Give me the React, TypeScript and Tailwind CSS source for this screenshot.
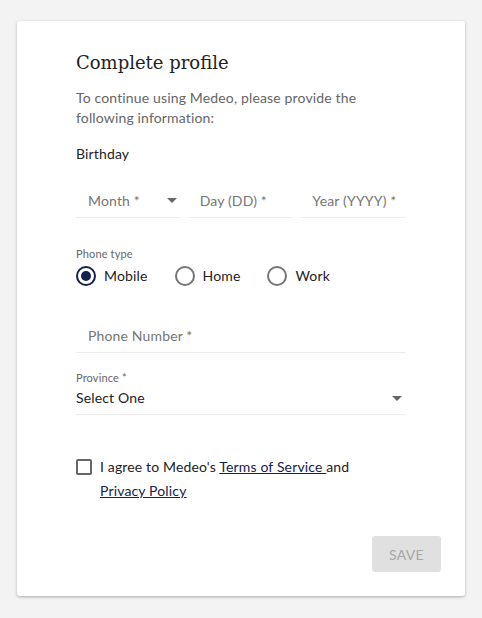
function Caret({ className = '' }: { className?: string }) {
  return (
    <svg width="10" height="5" viewBox="0 0 10 5" className={className}>
      <path d="M0 0 L10 0 L5 5 Z" fill="#666" />
    </svg>
  )
}

function Radio({ label, checked }: { label: string; checked?: boolean }) {
  return (
    <label className="flex items-center gap-[8px]">
      <span
        className={`flex h-[20px] w-[20px] items-center justify-center rounded-full border-2 ${
          checked ? 'border-[#14234b]' : 'border-[#757575]'
        }`}
      >
        {checked && <span className="h-[10px] w-[10px] rounded-full bg-[#14234b]" />}
      </span>
      <span className="text-[14px] text-[#222]">{label}</span>
    </label>
  )
}

export default function App() {
  return (
    <div className="min-h-[618px] bg-[#f3f3f3] pl-[17px] pt-[21px] font-['Lato',sans-serif] tracking-[0.15px]">
      <div className="h-[575px] w-[448px] rounded-[3px] bg-white pl-[59px] pr-[24px] pt-[28px] shadow-[0_1px_3px_rgba(0,0,0,0.3)]">
        <h1 className="font-['DejaVu_Serif',serif] text-[18px] leading-[28px] tracking-normal text-[#222]">Complete profile</h1>
        <p className="mt-[11px] w-[330px] text-[14px] leading-[20px] text-[#666]">
          To continue using Medeo, please provide the following information:
        </p>
        <p className="mt-[16px] text-[14px] leading-[20px] text-[#222]">Birthday</p>

        <div className="mt-[20px] flex w-[330px] gap-[8px]">
          <div className="flex h-[34px] w-[105px] items-center justify-between border-b border-[#ececec] pl-[12px] pr-[4px]">
            <span className="text-[14px] text-[#757575]">Month *</span>
            <Caret />
          </div>
          <div className="flex h-[34px] w-[105px] items-center border-b border-[#ececec] pl-[11px]">
            <span className="text-[14px] text-[#757575]">Day (DD) *</span>
          </div>
          <div className="flex h-[34px] w-[105px] items-center border-b border-[#ececec] pl-[11px]">
            <span className="text-[14px] text-[#757575]">Year (YYYY) *</span>
          </div>
        </div>

        <p className="mt-[28px] text-[11px] leading-[16px] text-[#666]">Phone type</p>
        <div className="mt-[3px] flex gap-[27px]">
          <Radio label="Mobile" checked />
          <Radio label="Home" />
          <Radio label="Work" />
        </div>

        <div className="mt-[33px] flex h-[34px] w-[330px] items-center border-b border-[#ececec] pl-[12px]">
          <span className="text-[14px] text-[#757575]">Phone Number *</span>
        </div>

        <div className="mt-[17px] w-[330px] border-b border-[#ececec] pb-[6px]">
          <p className="text-[11px] leading-[16px] text-[#666]">Province *</p>
          <div className="mt-[2px] flex items-center justify-between pr-[4px]">
            <span className="text-[14px] leading-[20px] text-[#222]">Select One</span>
            <Caret />
          </div>
        </div>

        <div className="mt-[40px] flex w-[330px] gap-[8px]">
          <span className="mt-[4px] h-[16px] w-[16px] shrink-0 rounded-[2px] border-2 border-[#666]" />
          <p className="text-[14px] leading-[24px] text-[#222]">
            I agree to Medeo's{' '}
            <a className="text-[#14234b] underline">Terms of Service </a> and
            <br />
            <a className="text-[#14234b] underline">Privacy Policy</a>
          </p>
        </div>

        <div className="mt-[33px] flex justify-end">
          <button className="h-[36px] w-[69px] rounded-[3px] bg-[#e0e0e0] text-[14px] tracking-[0.3px] text-[#a6a6a6]">
            SAVE
          </button>
        </div>
      </div>
    </div>
  )
}
